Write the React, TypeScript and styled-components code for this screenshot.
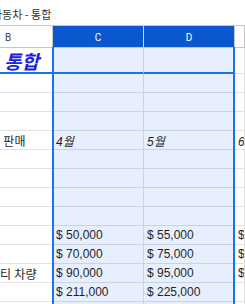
import React from "react";
import styled, { createGlobalStyle } from "styled-components";

const Global = createGlobalStyle`
  html, body { margin: 0; padding: 0; background: #fff; }
  body { font-family: "Liberation Sans", "Noto Sans CJK KR", Arial, sans-serif; }
  * { box-sizing: border-box; }
`;

const COLS = "53px 91px 91px 1fr";

const Page = styled.div`
  position: relative;
  width: 245px;
  height: 304px;
  overflow: hidden;
  background: #fff;
`;

const TitleBar = styled.div`
  height: 25px;
  display: flex;
  align-items: center;
  white-space: nowrap;
  font-family: "Noto Sans CJK KR", "Liberation Sans", sans-serif;
  font-size: 11px;
  color: #333;
`;

const TitleText = styled.span`
  margin-left: -8px;
  margin-top: 2px;
`;

const Sheet = styled.div`
  border-top: 1px solid #c4c7c5;
`;

const Row = styled.div<{ $h: number }>`
  display: grid;
  grid-template-columns: ${COLS};
  height: ${(p) => p.$h}px;
`;

const HeadCell = styled.div<{ $active?: boolean; $sep: string; $left?: boolean }>`
  display: flex;
  align-items: center;
  justify-content: ${(p) => (p.$left ? "flex-start" : "center")};
  padding-left: ${(p) => (p.$left ? "5px" : "0")};
  padding-top: 1px;
  background: ${(p) => (p.$active ? "#0b57d0" : "#fff")};
  color: ${(p) => (p.$active ? "#fff" : "#444")};
  font-family: "Roboto", "Liberation Sans", sans-serif;
  font-size: 10px;
  border-right: 1px solid ${(p) => p.$sep};
  border-bottom: 1px solid #c4c7c5;
`;

const Cell = styled.div<{ $sel?: boolean; $line?: string; $lineW?: number; $italic?: boolean }>`
  display: flex;
  align-items: center;
  min-width: 0;
  overflow: hidden;
  white-space: nowrap;
  padding: 0 3px;
  background: ${(p) => (p.$sel ? "#e7effd" : "#fff")};
  border-right: 1px solid ${(p) => (p.$sel ? "#c8d3e6" : "#e1e1e1")};
  border-bottom: ${(p) => p.$lineW ?? 1}px solid
    ${(p) => p.$line ?? (p.$sel ? "#c8d3e6" : "#e1e1e1")};
  font-size: 12px;
  color: #1f1f1f;
  font-style: ${(p) => (p.$italic ? "italic" : "normal")};
`;

const BigTitle = styled.span`
  margin-left: 1px;
  font-family: "Noto Sans CJK KR", sans-serif;
  font-weight: 700;
  font-style: italic;
  font-size: 19px;
  color: #2121e0;
`;

const Overflow = styled.span<{ $shift: number }>`
  margin-left: ${(p) => p.$shift}px;
`;

const Selection = styled.div`
  position: absolute;
  left: 52px;
  top: 47px;
  width: 183px;
  bottom: 0;
  border-left: 2px solid #1a73e8;
  border-right: 2px solid #1a73e8;
  pointer-events: none;
`;

type RowData = {
  b?: React.ReactNode;
  c?: string;
  d?: string;
  e?: string;
  italic?: boolean;
};

const rows: RowData[] = [
  {},
  {},
  {},
  { b: <Overflow $shift={-14}>별 판매</Overflow>, c: "4월", d: "5월", e: "6월", italic: true },
  {},
  {},
  {},
  {},
  { c: "$ 50,000", d: "$ 55,000", e: "$ 60,000" },
  { b: <Overflow $shift={-26}>트럭</Overflow>, c: "$ 70,000", d: "$ 75,000", e: "$ 80,000" },
  { b: <Overflow $shift={-3}>티 차량</Overflow>, c: "$ 90,000", d: "$ 95,000", e: "$ 99,000" },
  { c: "$ 211,000", d: "$ 225,000" },
  {},
];

export default function App() {
  return (
    <Page>
      <Global />
      <TitleBar>
        <TitleText>자동차 - 통합</TitleText>
      </TitleBar>
      <Sheet>
        <Row $h={22}>
          <HeadCell $left $sep="#c4c7c5">B</HeadCell>
          <HeadCell $active $sep="#c9d6ee">C</HeadCell>
          <HeadCell $active $sep="#c4c7c5">D</HeadCell>
          <HeadCell $sep="#c4c7c5" />
        </Row>
        <Row $h={26}>
          <Cell $line="#1a73e8" $lineW={2}>
            <BigTitle>통합</BigTitle>
          </Cell>
          <Cell $sel $line="#1a73e8" $lineW={2} />
          <Cell $sel $line="#1a73e8" $lineW={2} />
          <Cell />
        </Row>
        {rows.map((r, i) => (
          <Row $h={19} key={i}>
            <Cell>{r.b}</Cell>
            <Cell $sel $italic={r.italic}>{r.c}</Cell>
            <Cell $sel $italic={r.italic}>{r.d}</Cell>
            <Cell $italic={r.italic}>{r.e}</Cell>
          </Row>
        ))}
      </Sheet>
      <Selection />
    </Page>
  );
}
